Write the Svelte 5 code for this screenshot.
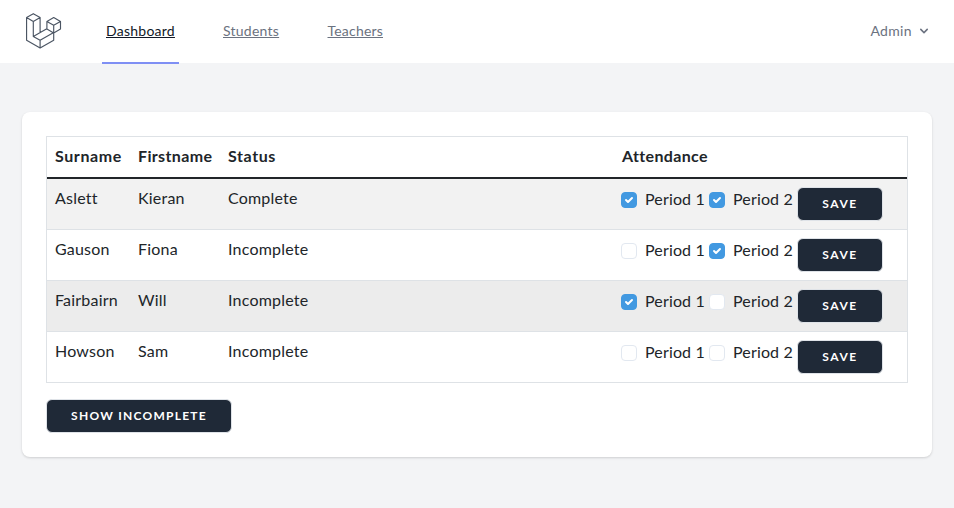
<script>
  const links = [
    { label: 'Dashboard', active: true },
    { label: 'Students', active: false },
    { label: 'Teachers', active: false }
  ];
  const students = [
    { surname: 'Aslett', firstname: 'Kieran', status: 'Complete', periods: [true, true] },
    { surname: 'Gauson', firstname: 'Fiona', status: 'Incomplete', periods: [false, true] },
    { surname: 'Fairbairn', firstname: 'Will', status: 'Incomplete', periods: [true, false], hovered: true },
    { surname: 'Howson', firstname: 'Sam', status: 'Incomplete', periods: [false, false] }
  ];
</script>

<div class="page">
  <nav>
    <svg class="logo" width="36" height="37" viewBox="0.4 0.5 36 37" fill="none" stroke="#4b5563" stroke-width="1.15" stroke-linejoin="round">
      <path d="M7.7 1.2 14.5 5 7.7 9 .98 5ZM.98 5v22.7l13.52 7.8 13.6-7.8V20M7.7 9v15l6.8 3.8v7.7M14.5 5v15.3M7.7 24l13.5-7.7M14.5 27.8 28.1 20M28.1 5 34.9 8.9v7.7L28.1 20.4 21.3 16.5V8.9ZM21.3 8.9l6.8 3.9 6.8-3.9M28.1 12.8v7.6" />
    </svg>
    <div class="links">
      {#each links as link}
        <a href="#top" class={link.label.toLowerCase()} class:active={link.active}><span>{link.label}</span></a>
      {/each}
    </div>
    <button class="user"><span>Admin</span>
      <svg width="16" height="16" viewBox="0 0 20 20" fill="#6b7280"><path fill-rule="evenodd" d="M5.293 7.293a1 1 0 011.414 0L10 10.586l3.293-3.293a1 1 0 111.414 1.414l-4 4a1 1 0 01-1.414 0l-4-4a1 1 0 010-1.414z" clip-rule="evenodd" /></svg>
    </button>
  </nav>

  <main>
    <table>
      <colgroup><col class="c1" /><col class="c2" /><col class="c3" /><col /></colgroup>
      <thead>
        <tr><th class="surname">Surname</th><th>Firstname</th><th class="status">Status</th><th class="last">Attendance</th></tr>
      </thead>
      <tbody>
        {#each students as student}
          <tr class:hovered={student.hovered}>
            <td>{student.surname}</td>
            <td>{student.firstname}</td>
            <td>{student.status}</td>
            <td class="actions">
              <div class="attendance">
                {#each student.periods as present, i}
                  <label>
                    <span class="box" class:checked={present}>
                      {#if present}
                        <svg width="16" height="16" viewBox="0 0 16 16" fill="#fff"><path d="M5.707 7.293a1 1 0 0 0-1.414 1.414l2 2a1 1 0 0 0 1.414 0l4-4a1 1 0 0 0-1.414-1.414L7 8.586 5.707 7.293z" /></svg>
                      {/if}
                    </span>
                    <span class="period">Period {i + 1}</span>
                  </label>
                {/each}
                <button class="dark save">SAVE</button>
              </div>
            </td>
          </tr>
        {/each}
      </tbody>
    </table>
    <button class="dark show">SHOW INCOMPLETE</button>
  </main>
</div>

<style>
  :global(body) { margin: 0; background: #f3f4f6; }
  * { box-sizing: border-box; }
  .page { min-height: 508px; background: #f3f4f6; font-family: Lato, "Open Sans", sans-serif; color: #212529; font-size: 16px; line-height: 24px; }
  nav { height: 64px; display: flex; background: linear-gradient(#fff 63px, #f3f4f6 63px); padding: 0 22px 0 26px; }
  .logo { margin-top: 13px; flex: none; }
  .links { display: flex; gap: 40px; margin-left: 40px; }
  a { display: flex; width: 77px; padding: 20px 0 0 4px; border-bottom: 2px solid transparent; font-size: 14px; line-height: 22px; color: #6b7280; text-underline-offset: 1px; text-decoration: underline; text-decoration-thickness: 1px; text-decoration-skip-ink: none; white-space: nowrap; }
  a.active { color: #111827; border-color: #7f8ff4; }
  .dashboard { letter-spacing: .25px; }
  .students { width: 64.5px; letter-spacing: .25px; }
  .teachers { width: 64px; letter-spacing: .2px; }
  .user { display: flex; align-items: center; gap: 4px; margin-left: auto; height: 60px; padding: 0; border: 0; background: none; font: 14px Lato, sans-serif; letter-spacing: .35px; color: #6b7280; }
  .user svg { margin-top: 2px; }
  main { width: 910px; height: 345px; margin: 48px 22px 0; padding: 24px; background: #fff; border-radius: 8px; box-shadow: 0 1px 3px rgba(0,0,0,.1), 0 1px 2px rgba(0,0,0,.06); }
  table { width: 862px; table-layout: fixed; border-collapse: separate; border-spacing: 0; border: 1px solid #dee2e6; border-bottom: 0; }
  .c1 { width: 83px; }
  .c2 { width: 90px; }
  .c3 { width: 393px; }
  th { height: 42px; padding: 7px 0 9px 8px; text-align: left; vertical-align: top; font-weight: 700; border-bottom: 2px solid #212529; white-space: nowrap; letter-spacing: .35px; }
  th.surname, th.status { letter-spacing: .6px; }
  th.last { padding-left: 9px; }
  td { height: 51px; padding: 7px 0 0 8px; vertical-align: top; border-bottom: 1px solid #dee2e6; letter-spacing: .2px; white-space: nowrap; }
  td.actions { padding-top: 8px; }
  tbody tr:nth-child(odd) { background: #f2f2f2; }
  tbody tr.hovered { background: #ececec; }
  .attendance { display: flex; align-items: flex-start; }
  label { display: flex; width: 88px; height: 24px; align-items: center; margin-top: 1px; }
  .box { width: 16px; height: 16px; flex: none; border: 1px solid #e2e8f0; border-radius: 4px; background: #fff; }
  .box.checked { background: #4299e1; border-color: #4299e1; }
  .box svg { display: block; margin: -1px; }
  .period { margin-left: 8px; padding-bottom: 2px; letter-spacing: .15px; }
  .dark { height: 34px; padding: 0; border: 1px solid #dfe3e8; border-radius: 6px; background: #1f2937; color: #fff; font: 700 12px/16px Lato, sans-serif; letter-spacing: 1.25px; }
  .save { width: 86px; letter-spacing: 1.5px; }
  .show { width: 186px; display: block; margin-top: 16px; }
</style>
